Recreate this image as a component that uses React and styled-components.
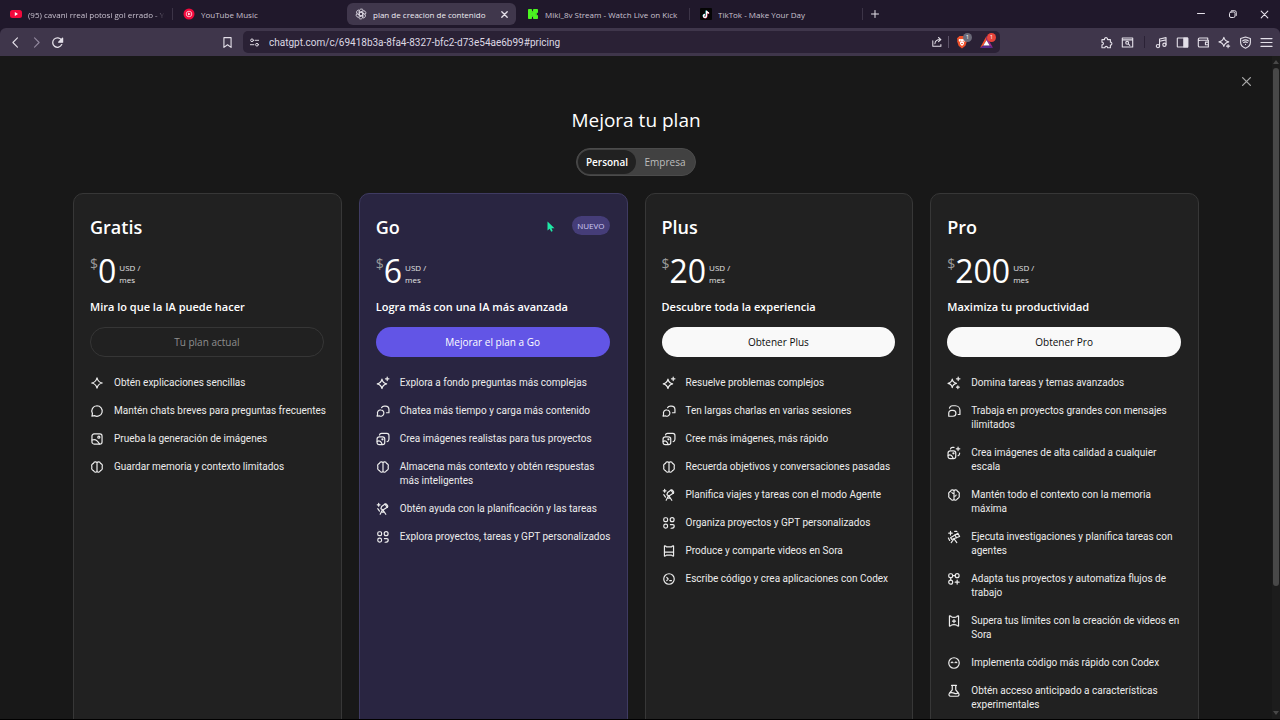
import React from "react";
import styled, { createGlobalStyle, css } from "styled-components";

const GlobalStyle = createGlobalStyle`
  *, *::before, *::after { box-sizing: border-box; }
  html, body, #root { height: 100%; }
  body {
    margin: 0;
    background: #000;
    color: #fff;
    font-family: "Open Sans", "Noto Sans", sans-serif;
    overflow: hidden;
  }
  button, input { font: inherit; color: inherit; }
  button { padding: 0; border: 0; background: none; }
  h1, h2, p, ul { margin: 0; padding: 0; }
  svg { display: block; flex: none; }
`;

/* ---------- icons ---------- */

const Svg = styled.svg.attrs({ viewBox: "0 0 20 20", "aria-hidden": true })`
  width: ${(p) => p.$size || 14}px;
  height: ${(p) => p.$size || 14}px;
  fill: none;
  stroke: currentColor;
  stroke-width: ${(p) => p.$weight || 1.7};
  stroke-linecap: round;
  stroke-linejoin: round;
`;

const frontImage = (
  <>
    <rect x="1.500" y="7" width="11" height="11" rx="3" />
    <circle cx="9.200" cy="10.400" r=".8" />
    <path d="M1.800 13.400c3.200-1.800 5.200.2 7.200 4.400" />
  </>
);

const brain = "M10 3.600v12.800M10 4c-1-1.900-4.300-1.900-5 .8C2.600 5.500 1.800 8 2.700 10c-.9 2.300.2 4.600 2.400 5.200.8 2.700 3.900 2.900 4.900 1M10 4c1-1.900 4.300-1.900 5 .8 2.400.7 3.200 3.200 2.300 5.200.9 2.300-.2 4.600-2.400 5.200-.8 2.700-3.900 2.900-4.900 1";

const featureIcons = {
  spark: <path d="M10 2.500c.9 4.300 3.200 6.600 7.500 7.500-4.300.9-6.600 3.200-7.500 7.500-.9-4.300-3.200-6.600-7.500-7.500 4.300-.9 6.600-3.200 7.500-7.500Z" />,
  sparkPlus: (
    <>
      <path d="M8.500 4.500c.8 4 2.700 5.900 6.700 6.700-4 .8-5.900 2.700-6.700 6.700-.8-4-2.700-5.900-6.700-6.700 4-.8 5.900-2.700 6.700-6.700Z" />
      <path d="M16 1.500v5M13.500 4h5" />
    </>
  ),
  sparkTriple: (
    <>
      <path d="M7.500 4.500c.7 3.600 2.400 5.300 6 6-3.600.7-5.300 2.400-6 6-.7-3.600-2.400-5.300-6-6 3.600-.7 5.300-2.400 6-6Z" />
      <path d="M16 1.500v5M13.500 4h5M15.500 14v4M13.500 16h4" />
    </>
  ),
  chat: <path d="M10 2.500a7.500 7.500 0 1 1-3.600 14.100L2.800 17.200l.7-3.500A7.500 7.500 0 0 1 10 2.500Z" />,
  chats: (
    <>
      <path d="M6.800 8.500a4.500 4.500 0 1 1-2.300 8.400L1.500 17.500l.8-3A4.500 4.500 0 0 1 6.800 8.500Z" />
      <path d="M8 5.200A4.700 4.700 0 0 1 12.300 3h1.200a5 5 0 0 1 5 5v4.500h-3.500" />
    </>
  ),
  chatsFull: (
    <>
      <path d="M2.500 17.500V13a4 4 0 0 1 4-4h2a4.200 4.200 0 0 1 0 8.500Z" />
      <path d="M3.500 6A4.600 4.600 0 0 1 7.800 2.500h4.200a6.500 6.500 0 0 1 6.500 6.500v6H16" />
    </>
  ),
  image: (
    <>
      <rect x="2.800" y="2.800" width="14.400" height="14.400" rx="3" />
      <circle cx="12.600" cy="7.400" r="1.500" />
      <path d="M3 11.500c4-2 7.500 0 10.500 5.500" />
    </>
  ),
  images: (
    <>
      {frontImage}
      <path d="M5 4.300A3 3 0 0 1 8 2h7.500a3 3 0 0 1 3 3v5.500a3.500 3.500 0 0 1-2.700 3.400" />
    </>
  ),
  imagesSpark: (
    <>
      {frontImage}
      <path d="M5 4.300A3 3 0 0 1 8 2h2M18 10v.8a3.500 3.500 0 0 1-2.200 3.100M15.800 1.500v5M13.300 4h5" />
    </>
  ),
  memory: <path d={brain} />,
  memoryFull: <path d={`${brain}M10 8c-1.500 0-2.600-.6-3-1.800M10 12c1.500 0 2.600-.6 3-1.800`} />,
  telescope: (
    <>
      <path d="M8 6.500 13 2.800c1.500-1 4.700 2.600 3.500 4.400L10 11.500 7 9.500Z" />
      <path d="m12.800 3 3.500 4.700M9 11.500 6 17.500M10 11.500l4 6M9 14.500h3M2.500 9.500l2.500 3.500M3.800 2v4M1.800 4h4" />
    </>
  ),
  telescopePlus: (
    <>
      <path d="m5 11 10.500-6.500 2.500 4.800L6.800 13.500Z" />
      <path d="m11.500 7 2 4M10 12.500 6 18M10 12.500l4 5.500M2 11.500l1.800 3.500M5 2v5M2.500 4.500h5M11 2h3" />
    </>
  ),
  apps: (
    <>
      <rect x="2.500" y="2.500" width="5.500" height="5.500" rx="2" />
      <circle cx="14.500" cy="5.200" r="2.800" />
      <rect x="2.500" y="11.700" width="5.500" height="5.500" rx="2.600" />
      <path d="M12 12.200h3.500a2 2 0 0 1 2 2c0 2-2 3.300-4.500 3.300" />
    </>
  ),
  appsPlus: (
    <>
      <rect x="2.500" y="2.500" width="5.500" height="5.500" rx="2" />
      <circle cx="14.500" cy="5.200" r="2.800" />
      <circle cx="5.300" cy="14.500" r="2.800" />
      <path d="M8 5.200h3.700M5.300 8v3.700M14.500 11.700v5.600M11.700 14.500h5.600" />
    </>
  ),
  video: (
    <>
      <path d="M3.500 2.800c1.600 0 2.400.4 3 1.400h7c.6-1 1.400-1.400 3-1.400v14.400c-1.600 0-2.400-.4-3-1.400h-7c-.6 1-1.400 1.400-3 1.400Z" />
      <path d="M3.500 11.500h13" />
    </>
  ),
  videoSpark: (
    <>
      <path d="M3.500 2.800c1.600 0 2.400.4 3 1.400.8 1 6.200 1 7 0 .6-1 1.400-1.400 3-1.400v14.400c-1.600 0-2.400-.4-3-1.400-.8-1-6.200-1-7 0-.6 1-1.400 1.400-3 1.400Z" />
      <path d="M10 8v4.500M7.800 10.200h4.400" />
    </>
  ),
  terminal: (
    <>
      <circle cx="10" cy="10" r="7.500" />
      <path d="m6.800 7.800 2 2.200-2 2.200M11 12.200h2.500" />
    </>
  ),
  codex: (
    <>
      <circle cx="10" cy="10" r="7.500" />
      <path d="M6 9.500c.5-1 2-1 2.500 0M11.500 9.500c.5-1 2-1 2.500 0" />
    </>
  ),
  flask: (
    <path d="M6.500 2h7M7.500 2v6.500l-4 4.700c-1.500 2-.5 4.300 1.700 4.300h9.600c2.200 0 3.200-2.300 1.700-4.300l-4-4.700V2M4 13c2-1.200 4-1 6 0s4 1.200 6 0" />
  ),
};

const chromeIcons = {
  back: <path d="m13 3-7 7 7 7" />,
  forward: <path d="m7 3 7 7-7 7" />,
  reload: (
    <>
      <path d="M16.500 13.200A7.300 7.300 0 1 1 16 6" />
      <path d="M17.800 3.500v6h-6Z" fill="currentColor" />
    </>
  ),
  bookmark: <path d="M4.500 2.500h11v15L10 13.500l-5.500 4Z" />,
  tune: (
    <>
      <circle cx="5.500" cy="6" r="2.500" />
      <circle cx="14.500" cy="14" r="2.500" />
      <path d="M11 6h6.500M2.500 14H9" />
    </>
  ),
  share: <path d="M3 8v9h13.500v-3M6.500 13c.5-5 3.500-7 9-7M12.500 2.500 16.500 6l-4 3.500" />,
  puzzle: (
    <path d="M3 5.500h4c-.8-4 5.300-4 4.500 0h4.500v4c3-.6 3 5 0 4.500v4h-4.300c.3-2.700-4.500-2.700-4.200 0H3v-4.500c3 .2 3-4.200 0-4Z" />
  ),
  history: (
    <>
      <path d="M2 3h16v14H2ZM2 6h16" />
      <circle cx="9.500" cy="10.500" r="2.200" />
      <path d="m11.200 12.200 2.300 2.300" />
    </>
  ),
  music: (
    <>
      <circle cx="4.500" cy="15.500" r="2.500" />
      <circle cx="14.500" cy="13.500" r="2.500" />
      <path d="M7 15.500V4.500l10-2v11M7 8l10-2" />
    </>
  ),
  panel: (
    <>
      <rect x="2" y="3" width="16" height="14" rx="1" />
      <path d="M12 3h6v14h-6Z" fill="currentColor" />
    </>
  ),
  wallet: <path d="M16.500 6V3H4a2 2 0 0 0 0 4M2 5v10a2 2 0 0 0 2 2h13.500V6.500H4M17.500 9.500H13v4h4.500" />,
  leo: (
    <>
      <path d="M9 2c1 4.200 2.800 6 7.500 7-4.700 1-6.500 2.800-7.500 7-1-4.200-2.800-6-7.500-7C6.200 8 8 6.200 9 2Z" />
      <path d="M15.500 13v5M13 15.500h5" />
    </>
  ),
  vpn: (
    <>
      <path d="M10 1.500 17.500 4v6c0 4-3 7-7.500 8.800C5.500 17 2.500 14 2.500 10V4Z" />
      <path d="M5.500 7.500c3-2 6-2 9 0M7.200 10c2-1.300 3.600-1.300 5.600 0M10 12.800v.2" />
    </>
  ),
  menu: <path d="M1.500 4h17M1.500 10h17M1.500 16h17" />,
  close: <path d="m4 4 12 12M16 4 4 16" />,
  plus: <path d="M10 3v14M3 10h14" />,
  minimize: <path d="M3 9h14" />,
  restore: (
    <>
      <rect x="3" y="6" width="11" height="11" rx="3" />
      <path d="M7 3.500h6.500a3 3 0 0 1 3 3V13" />
    </>
  ),
};

const YouTubeLogo = () => (
  <svg width="12" height="12" viewBox="0 0 12 12" aria-hidden="true">
    <rect y="2" width="12" height="8" rx="2.500" fill="#f3093c" />
    <path d="M4.800 4v4L8 6Z" fill="#fff" />
  </svg>
);
const MusicLogo = () => (
  <svg width="12" height="12" viewBox="0 0 12 12" aria-hidden="true">
    <circle cx="6" cy="6" r="5.500" fill="#f3093c" />
    <circle cx="6" cy="6" r="2.800" fill="none" stroke="#fff" strokeWidth=".7" />
    <path d="M5.100 4.500v3L7.600 6Z" fill="#fff" />
  </svg>
);
const OpenAILogo = () => (
  <svg width="12" height="12" viewBox="0 0 24 24" fill="none" stroke="#dcd8e2" strokeWidth="1.700" aria-hidden="true">
    {[0, 60, 120, 180, 240, 300].map((a) => (
      <path key={a} transform={`rotate(${a} 12 12)`} d="M8.500 13.800V6.300a4.400 4.400 0 0 1 8-2.500M8.500 9.800l6.500-3.700" strokeLinecap="round" />
    ))}
  </svg>
);
const KickLogo = () => (
  <svg width="12" height="12" viewBox="0 0 12 12" aria-hidden="true">
    <path d="M1.500 1.500h3v3h1v-1h1v-2h4v3h-1v1h-1v1h1v1h1v3h-4v-2h-1v-1h-1v3h-3Z" fill="#4bf520" stroke="#4bf520" />
  </svg>
);
const TikTokLogo = () => (
  <svg width="12" height="12" viewBox="0 0 12 12" aria-hidden="true">
    <rect width="12" height="12" rx="1" fill="#050505" />
    <g fill="none" strokeWidth="1.300">
      <path d="M6.200 2.500v5.300a1.500 1.500 0 1 1-1.500-1.500M6.200 2.700c.2 1.300 1 2 2.500 2.100" stroke="#28e5e0" />
      <path d="M6.800 3v5.300a1.500 1.500 0 1 1-1.500-1.500M6.800 3.200c.2 1.300 1 2 2.500 2.100" stroke="#f8305a" />
      <path d="M6.500 2.700V8A1.500 1.500 0 1 1 5 6.500M6.500 2.900C6.700 4.200 7.500 4.900 9 5" stroke="#fff" />
    </g>
  </svg>
);

/* ---------- browser frame ---------- */

const Browser = styled.div`
  display: flex;
  flex-direction: column;
  height: 100vh;
  padding-bottom: 1px;
`;

const TabStrip = styled.nav`
  display: flex;
  align-items: center;
  flex: none;
  height: 28px;
  background: #20182b;
  font-size: 8px;
  color: #c9c2d0;
`;

const TabBox = styled.div`
  position: relative;
  display: flex;
  align-items: center;
  flex: 0 1 173px;
  min-width: 0;
  height: 22px;
  padding: 0 8px 0 10px;
  border-radius: 6px;
  ${(p) => p.$active && css`
    background: #40374c;
    color: #efecf3;
    flex-basis: 169px;
    margin: 0 1px;
    padding-left: 8px;
  `}
  ${(p) => p.$divider && css`
    &::after {
      content: "";
      position: absolute;
      right: 0;
      top: 5px;
      height: 12px;
      border-right: 1px solid #3c3447;
    }
  `}
`;

const TabTitle = styled.button`
  display: flex;
  align-items: center;
  gap: 6px;
  flex: 1;
  min-width: 0;
  text-align: left;
`;

const TabLabel = styled.span`
  flex: 1;
  overflow: hidden;
  white-space: nowrap;
  ${(p) => p.$fade && css`
    mask-image: linear-gradient(to right, #000 92%, transparent);
  `}
`;

const IconButton = styled.button`
  position: relative;
  display: flex;
  align-items: center;
  justify-content: center;
  flex: none;
  width: ${(p) => p.$width || 21}px;
  height: 20px;
  color: ${(p) => p.$color || "#e4e0e9"};
`;

const WindowControls = styled.div`
  display: flex;
  margin-left: auto;
`;

const ToolbarBack = styled.div`
  flex: none;
  background: #20182b;
`;

const Toolbar = styled.div`
  display: flex;
  align-items: center;
  height: 28px;
  padding: 0 3px 0 5px;
  border-radius: 6px 6px 0 0;
  background: #3f364b;
`;

const NavGroup = styled.div`
  display: flex;
  width: 212px;
`;

const AddressBar = styled.div`
  display: flex;
  align-items: center;
  flex: 1;
  max-width: 757px;
  min-width: 0;
  height: 22px;
  margin-left: 5px;
  padding: 0 2px 0 1px;
  border-radius: 5px;
  background: #2a2135;
`;

const AddressInput = styled.input`
  flex: 1;
  min-width: 0;
  margin-left: 4px;
  padding: 0;
  border: 0;
  outline: 0;
  background: none;
  font-family: Roboto, sans-serif;
  font-size: 10px;
  color: #ddd8e3;
`;

const Separator = styled.span`
  flex: none;
  width: 1px;
  height: 12px;
  margin: 0 ${(p) => p.$gap}px;
  background: ${(p) => p.$color || "#5c5368"};
`;

const Badge = styled.span`
  position: absolute;
  top: 1px;
  right: 2px;
  width: 9px;
  height: 9px;
  border-radius: 50%;
  background: ${(p) => p.$color};
  color: #fff;
  font-size: 6px;
  line-height: 9px;
  text-align: center;
`;

const ToolbarActions = styled.div`
  display: flex;
  align-items: center;
  margin-left: auto;
`;

/* ---------- page ---------- */

const Viewport = styled.div`
  display: flex;
  flex: 1;
  min-height: 0;
  background: #181818;
`;

const Page = styled.main`
  flex: 1;
  min-width: 0;
  overflow: hidden;
`;

const Scrollbar = styled.div`
  display: flex;
  flex-direction: column;
  align-items: center;
  flex: none;
  width: 8px;
  padding: 3px 1px;
  background: #1c1c1c;
`;

const ScrollTrack = styled.div`
  flex: 1;
  width: 6px;
  margin: 3px 0;
`;

const ScrollThumb = styled.div`
  height: 81%;
  border-radius: 3px;
  background: #484848;
`;

const ScrollArrow = styled.svg`
  width: 6px;
  height: 6px;
  fill: #484848;
`;

const CloseRow = styled.div`
  display: flex;
  justify-content: flex-end;
  padding: 15px 16px 0;
`;

const PageTitle = styled.h1`
  margin-top: 15px;
  font-size: 19px;
  line-height: 28px;
  font-weight: 400;
  text-align: center;
`;

const Toggle = styled.div`
  display: flex;
  width: 120px;
  height: 28px;
  margin: 14px auto 17px;
  padding: 1px;
  border: 1px solid #4b4b4b;
  border-radius: 14px;
  background: #414141;
`;

const ToggleOption = styled.button`
  flex: 1;
  border-radius: 12px;
  font-size: 10px;
  font-weight: ${(p) => (p.$active ? 600 : 400)};
  color: ${(p) => (p.$active ? "#fff" : "#bdbdbd")};
  background: ${(p) => (p.$active ? "#212121" : "none")};
`;

const Plans = styled.div`
  display: grid;
  grid-template-columns: repeat(4, minmax(0, 1fr));
  gap: 17px;
  max-width: 1272px;
  margin: 0 auto;
  padding: 0 73px 40px;
`;

const Card = styled.section`
  padding: 19px 17px 24px 16px;
  border: 1px solid ${(p) => (p.$accent ? "#3f3b62" : "#373737")};
  border-radius: 10px;
  background: ${(p) => (p.$accent ? "#292541" : "#212121")};
`;

const CardHead = styled.div`
  display: flex;
  align-items: flex-start;
  justify-content: space-between;
  height: 28px;
`;

const PlanName = styled.h2`
  font-size: 18px;
  line-height: 28px;
  font-weight: 600;
`;

const NewTag = styled.span`
  margin-top: 3px;
  padding: 0 5px;
  border-radius: 10px;
  background: #453d78;
  color: #cfcaf5;
  font-size: 8px;
  line-height: 19px;
`;

const Price = styled.div`
  display: flex;
  align-items: flex-start;
  height: 40px;
  margin-top: 10px;
`;

const Currency = styled.span`
  font-size: 14px;
  line-height: 26px;
  color: #9b9b9b;
`;

const Amount = styled.span`
  font-size: 32px;
  line-height: 40px;
`;

const Period = styled.span`
  margin: 11px 0 0 3px;
  font-size: 8px;
  line-height: 12px;
  color: #e4e4e4;
`;

const Tagline = styled.p`
  margin-top: 8px;
  font-size: 11px;
  line-height: 16px;
  font-weight: 600;
  white-space: nowrap;
`;

const buttonLooks = {
  current: css`
    border: 1px solid #363636;
    color: #8f8f8f;
  `,
  accent: css`
    background: #6255e6;
    color: #fff;
    font-weight: 500;
  `,
  light: css`
    background: #f9f9f9;
    color: #0d0d0d;
  `,
};

const PlanButton = styled.button`
  display: block;
  width: 100%;
  height: 30px;
  margin-top: 12px;
  border-radius: 15px;
  font-size: 10px;
  ${(p) => buttonLooks[p.$look]}
`;

const Features = styled.ul`
  display: grid;
  gap: 14px;
  margin: 19px -8px 0 0;
  list-style: none;
`;

const Feature = styled.li`
  display: flex;
  gap: 10px;
  font-family: Roboto, sans-serif;
  font-size: 10px;
  line-height: 14px;
  color: #ececec;
  white-space: pre-line;
`;

const Pointer = styled.svg`
  position: absolute;
  left: 547px;
  top: 221px;
  width: 8px;
  height: 11px;
`;

const tabs = [
  { title: "(95) cavani rreal potosi gol errado - YouTube", Logo: YouTubeLogo, divider: true, fade: true },
  { title: "YouTube Music", Logo: MusicLogo },
  { title: "plan de creacion de contenido", Logo: OpenAILogo, active: true },
  { title: "Miki_8v Stream - Watch Live on Kick", Logo: KickLogo, divider: true },
  { title: "TikTok - Make Your Day", Logo: TikTokLogo, divider: true },
];

const plans = [
  {
    name: "Gratis",
    price: "0",
    tagline: "Mira lo que la IA puede hacer",
    action: "Tu plan actual",
    look: "current",
    features: [
      ["spark", "Obtén explicaciones sencillas"],
      ["chat", "Mantén chats breves para preguntas frecuentes"],
      ["image", "Prueba la generación de imágenes"],
      ["memory", "Guardar memoria y contexto limitados"],
    ],
  },
  {
    name: "Go",
    price: "6",
    tag: "NUEVO",
    accent: true,
    tagline: "Logra más con una IA más avanzada",
    action: "Mejorar el plan a Go",
    look: "accent",
    features: [
      ["sparkPlus", "Explora a fondo preguntas más complejas"],
      ["chats", "Chatea más tiempo y carga más contenido"],
      ["images", "Crea imágenes realistas para tus proyectos"],
      ["memory", "Almacena más contexto y obtén respuestas\nmás inteligentes"],
      ["telescope", "Obtén ayuda con la planificación y las tareas"],
      ["apps", "Explora proyectos, tareas y GPT personalizados"],
    ],
  },
  {
    name: "Plus",
    price: "20",
    tagline: "Descubre toda la experiencia",
    action: "Obtener Plus",
    look: "light",
    features: [
      ["sparkPlus", "Resuelve problemas complejos"],
      ["chats", "Ten largas charlas en varias sesiones"],
      ["images", "Cree más imágenes, más rápido"],
      ["memory", "Recuerda objetivos y conversaciones pasadas"],
      ["telescope", "Planifica viajes y tareas con el modo Agente"],
      ["apps", "Organiza proyectos y GPT personalizados"],
      ["video", "Produce y comparte videos en Sora"],
      ["terminal", "Escribe código y crea aplicaciones con Codex"],
    ],
  },
  {
    name: "Pro",
    price: "200",
    tagline: "Maximiza tu productividad",
    action: "Obtener Pro",
    look: "light",
    features: [
      ["sparkTriple", "Domina tareas y temas avanzados"],
      ["chatsFull", "Trabaja en proyectos grandes con mensajes\nilimitados"],
      ["imagesSpark", "Crea imágenes de alta calidad a cualquier\nescala"],
      ["memoryFull", "Mantén todo el contexto con la memoria\nmáxima"],
      ["telescopePlus", "Ejecuta investigaciones y planifica tareas con\nagentes"],
      ["appsPlus", "Adapta tus proyectos y automatiza flujos de\ntrabajo"],
      ["videoSpark", "Supera tus límites con la creación de videos en\nSora"],
      ["codex", "Implementa código más rápido con Codex"],
      ["flask", "Obtén acceso anticipado a características\nexperimentales"],
    ],
  },
];

function ChromeButton({ icon, label, size = 13, weight, ...rest }) {
  return (
    <IconButton type="button" aria-label={label} {...rest}>
      <Svg $size={size} $weight={weight}>{chromeIcons[icon]}</Svg>
    </IconButton>
  );
}

function PlanCard({ plan }) {
  return (
    <Card $accent={plan.accent}>
      <CardHead>
        <PlanName>{plan.name}</PlanName>
        {plan.tag && <NewTag>{plan.tag}</NewTag>}
      </CardHead>
      <Price>
        <Currency>$</Currency>
        <Amount>{plan.price}</Amount>
        <Period>USD /<br />mes</Period>
      </Price>
      <Tagline>{plan.tagline}</Tagline>
      <PlanButton type="button" $look={plan.look} disabled={plan.look === "current"}>
        {plan.action}
      </PlanButton>
      <Features>
        {plan.features.map(([icon, text]) => (
          <Feature key={text}>
            <Svg>{featureIcons[icon]}</Svg>
            <span>{text}</span>
          </Feature>
        ))}
      </Features>
    </Card>
  );
}

export default function App() {
  return (
    <Browser>
      <GlobalStyle />
      <TabStrip>
        {tabs.map(({ title, Logo, active, divider, fade }) => (
          <TabBox key={title} $active={active} $divider={divider}>
            <TabTitle type="button">
              <Logo />
              <TabLabel $fade={fade}>{title}</TabLabel>
            </TabTitle>
            {active && <ChromeButton icon="close" label="Cerrar pestaña" size={9} weight={3} $width={8} />}
          </TabBox>
        ))}
        <ChromeButton icon="plus" label="Nueva pestaña" size={10} weight={2} $width={24} />
        <WindowControls>
          <ChromeButton icon="minimize" label="Minimizar" size={10} weight={2} $width={32} />
          <ChromeButton icon="restore" label="Restaurar" size={10} weight={2} $width={32} />
          <ChromeButton icon="close" label="Cerrar" size={11} weight={2} $width={31} />
        </WindowControls>
      </TabStrip>
      <ToolbarBack>
        <Toolbar>
          <NavGroup>
            <ChromeButton icon="back" label="Atrás" />
            <ChromeButton icon="forward" label="Adelante" $color="#93899f" />
            <ChromeButton icon="reload" label="Recargar" weight={2} />
          </NavGroup>
          <ChromeButton icon="bookmark" label="Guardar marcador" />
          <AddressBar>
            <ChromeButton icon="tune" label="Información del sitio" size={11} />
            <AddressInput
              type="text"
              aria-label="Dirección"
              defaultValue="chatgpt.com/c/69418b3a-8fa4-8327-bfc2-d73e54ae6b99#pricing"
            />
            <ChromeButton icon="share" label="Compartir" size={12} />
            <Separator $gap={1} />
            <IconButton type="button" aria-label="Escudos" $width={24}>
              <svg width="12" height="14" viewBox="0 0 12 14" aria-hidden="true">
                <path d="M3.500 1h5l1.300 1.200 1.200 1-.4 2 .3 1-1.500 4.500L6 13.500 2.600 10.700 1.100 6.200l.3-1-.4-2 1.200-1Z" fill="#f0512b" />
                <path d="m3 4 2 .3L6 4l1 .3L9 4l.3 1.600L7.800 7.500 8 9 6 11 4 9l.2-1.500L2.700 5.600Z" fill="#fff" />
                <path d="m4 6 1.300.5M8 6l-1.300.5M5 8.500h2" stroke="#f0512b" strokeWidth=".8" />
              </svg>
              <Badge $color="#6b6a79">1</Badge>
            </IconButton>
            <IconButton type="button" aria-label="Recompensas" $width={24}>
              <svg width="13" height="12" viewBox="0 0 13 12" aria-hidden="true">
                <path d="M6.500 0v4.200L3.300 9.500 0 12Z" fill="#f4502c" />
                <path d="m6.500 0 6.500 12-3.300-2.500-3.200-5.300Z" fill="#9d2a8c" />
                <path d="m0 12 3.300-2.500h6.400L13 12Z" fill="#5a2a8c" />
                <path d="m6.500 4.200 3.200 5.300H3.300Z" fill="#fff" />
              </svg>
              <Badge $color="#e8443b">1</Badge>
            </IconButton>
          </AddressBar>
          <ToolbarActions>
            <ChromeButton icon="puzzle" label="Extensiones" />
            <ChromeButton icon="history" label="Buscar pestañas" />
            <Separator $gap={6} $color="#2b2236" />
            <ChromeButton icon="music" label="Multimedia" />
            <ChromeButton icon="panel" label="Barra lateral" />
            <ChromeButton icon="wallet" label="Cartera" />
            <ChromeButton icon="leo" label="Asistente" />
            <ChromeButton icon="vpn" label="VPN" />
            <ChromeButton icon="menu" label="Menú" />
          </ToolbarActions>
        </Toolbar>
      </ToolbarBack>
      <Viewport>
        <Page>
          <CloseRow>
            <ChromeButton icon="close" label="Cerrar" size={13} weight={2} $width={20} $color="#a8a8a8" />
          </CloseRow>
          <PageTitle>Mejora tu plan</PageTitle>
          <Toggle role="group" aria-label="Tipo de plan">
            <ToggleOption type="button" aria-pressed="true" $active>Personal</ToggleOption>
            <ToggleOption type="button" aria-pressed="false">Empresa</ToggleOption>
          </Toggle>
          <Plans>
            {plans.map((plan) => (
              <PlanCard key={plan.name} plan={plan} />
            ))}
          </Plans>
        </Page>
        <Scrollbar aria-hidden="true">
          <ScrollArrow viewBox="0 0 6 6"><path d="M3 1 6 5H0Z" /></ScrollArrow>
          <ScrollTrack><ScrollThumb /></ScrollTrack>
          <ScrollArrow viewBox="0 0 6 6"><path d="M3 5 0 1h6Z" /></ScrollArrow>
        </Scrollbar>
      </Viewport>
      <Pointer viewBox="0 0 8 11" aria-hidden="true">
        <path d="M.5.5v9l2.200-1.700 1.500 3 1.500-.8-1.200-2.800H7.500Z" fill="#1fe8a6" />
      </Pointer>
    </Browser>
  );
}
